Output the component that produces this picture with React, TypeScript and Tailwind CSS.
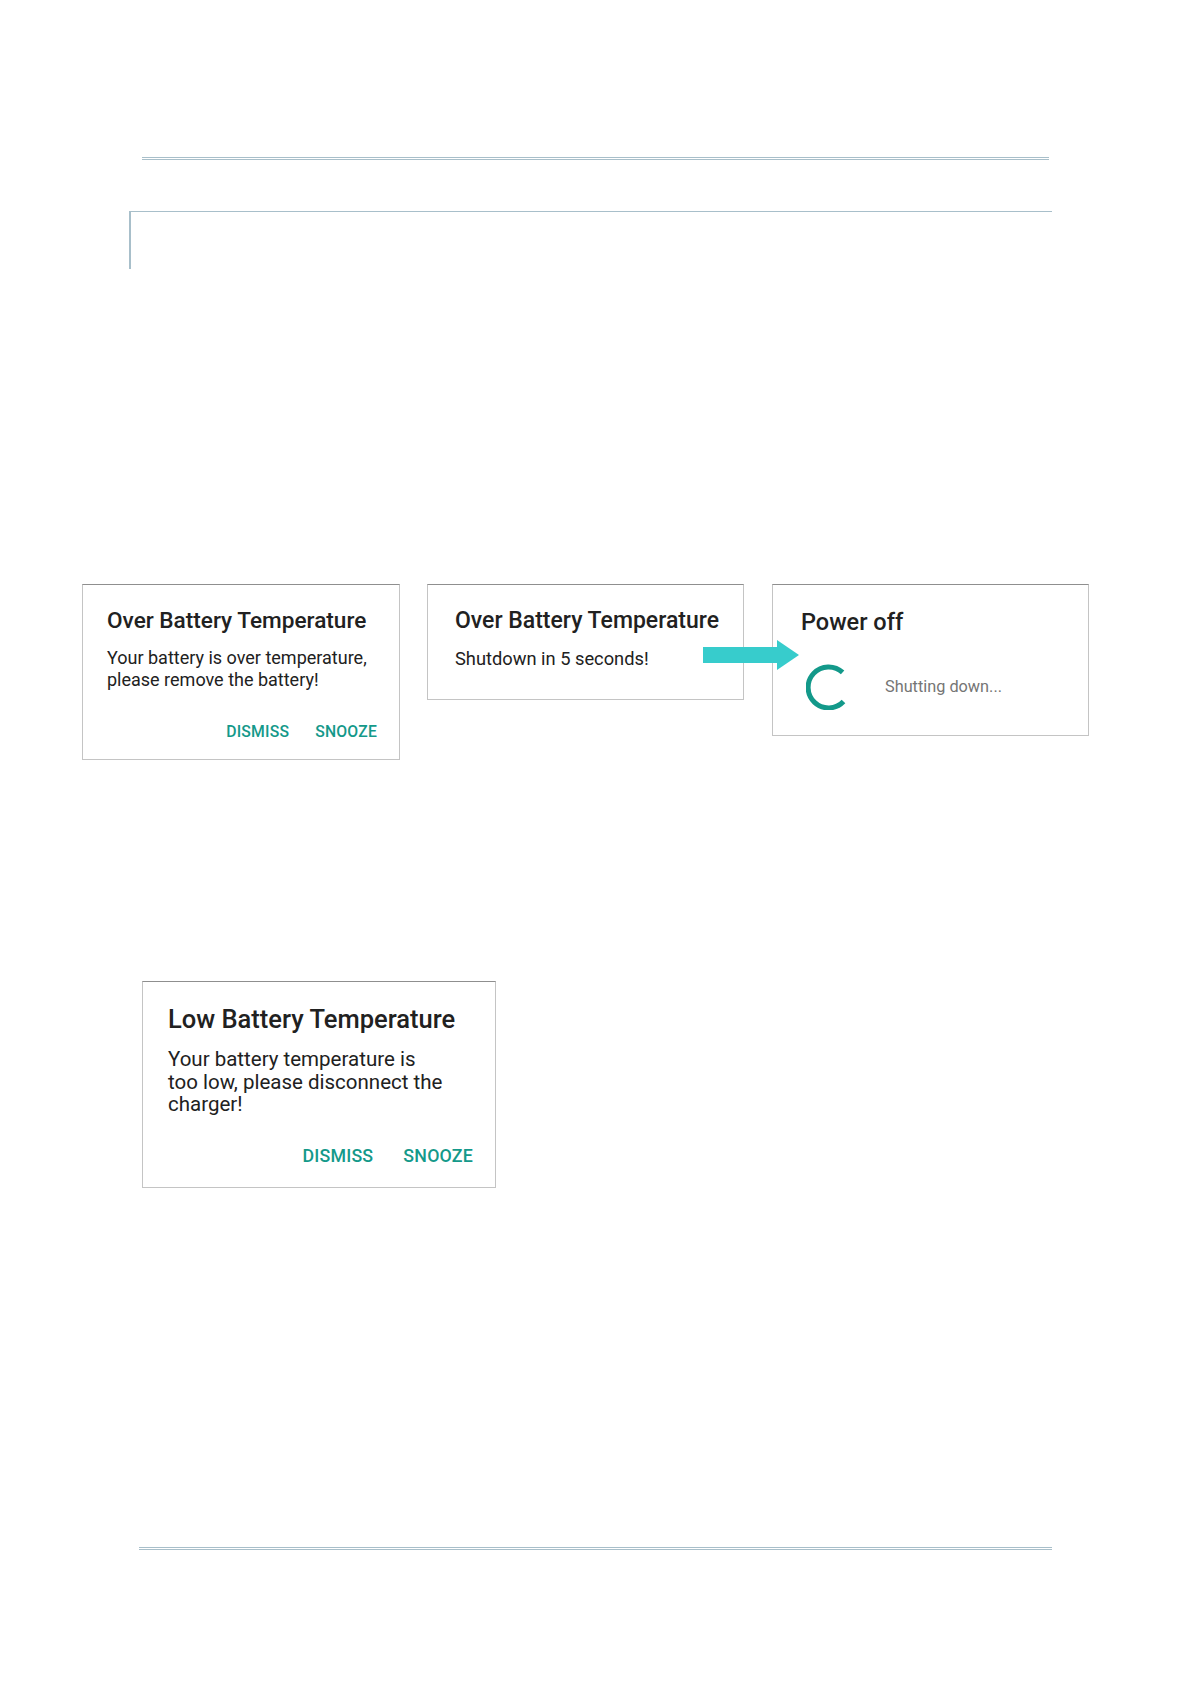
const teal = "text-[#14998a]";

const Spinner = () => (
  <svg width="46" height="46" viewBox="0 0 46 46" fill="none">
    <path
      d="M36.6 8.4 A20.5 20.5 0 1 0 37.5 37.5"
      stroke="#13998a"
      strokeWidth="5"
    />
  </svg>
);

const Arrow = () => (
  <svg width="96" height="30" viewBox="0 0 96 30">
    <rect x="0" y="7" width="75" height="16" fill="#37cccc" />
    <polygon points="74,0 96,15 74,30" fill="#37cccc" />
  </svg>
);

const Actions = ({ size }: { size: "sm" | "lg" }) => (
  <div
    className={`flex justify-end font-medium tracking-[0.2px] ${teal} ${
      size === "sm"
        ? "gap-[26px] text-[15.75px] leading-[20px]"
        : "gap-[30px] text-[17.8px] leading-[20px]"
    }`}
  >
    <span>DISMISS</span>
    <span>SNOOZE</span>
  </div>
);

export default function App() {
  return (
    <div
      className="relative w-[1191px] h-[1683px] bg-white overflow-hidden text-[#212121]"
      style={{ fontFamily: "Roboto, 'Noto Sans', sans-serif" }}
    >
      <div className="pt-[157px]">
        {/* header rule */}
        <div className="ml-[142px] w-[907px] h-[3px] border-t border-b border-[#a8bfca]" />

        {/* framed heading area */}
        <div className="mt-[51px] ml-[129px] w-[923px] h-[58px] border-t border-l-2 border-[#a8bfca]" />

        {/* over temperature flow */}
        <div className="relative mt-[315px] ml-[82px] flex items-start">
          <div className="w-[318px] h-[176px] border border-[#c4c4c4] border-t-[#8f8f8f] pt-[23px] pl-[24px] pr-[22px]">
            <h3 className="text-[22.6px] leading-[26px] font-medium">
              Over Battery Temperature
            </h3>
            <p className="mt-[13px] text-[18px] leading-[22px]">
              Your battery is over temperature,
              <br />
              please remove the battery!
            </p>
            <div className="mt-[31px]">
              <Actions size="sm" />
            </div>
          </div>

          <div className="ml-[27px] w-[317px] h-[116px] border border-[#c4c4c4] border-t-[#8f8f8f] pt-[23px] pl-[27px]">
            <h3 className="text-[23px] leading-[26px] font-medium">
              Over Battery Temperature
            </h3>
            <p className="mt-[14px] text-[18.3px] leading-[22px]">
              Shutdown in 5 seconds!
            </p>
          </div>

          <div className="ml-[28px] w-[317px] h-[152px] border border-[#c4c4c4] border-t-[#8f8f8f] pt-[24px] pl-[28px]">
            <h3 className="text-[23.5px] leading-[26px] font-medium">
              Power off
            </h3>
            <div className="mt-[29px] pl-[5px] flex items-center">
              <Spinner />
              <span className="ml-[33px] text-[16.3px] text-[#757575]">
                Shutting down...
              </span>
            </div>
          </div>

          <div className="absolute left-[621px] top-[56px]">
            <Arrow />
          </div>
        </div>

        {/* low temperature */}
        <div className="mt-[221px] ml-[142px] w-[354px] h-[207px] border border-[#c4c4c4] border-t-[#8f8f8f] pt-[23px] pl-[25px] pr-[22px]">
          <h3 className="text-[25.5px] leading-[28px] font-medium">
            Low Battery Temperature
          </h3>
          <p className="mt-[15px] text-[20.5px] leading-[22.5px]">
            Your battery temperature is
            <br />
            too low, please disconnect the
            <br />
            charger!
          </p>
          <div className="mt-[30px]">
            <Actions size="lg" />
          </div>
        </div>

        {/* footer rule */}
        <div className="mt-[359px] ml-[139px] w-[913px] h-[3px] border-t border-b border-[#a8bfca]" />
      </div>
    </div>
  );
}
